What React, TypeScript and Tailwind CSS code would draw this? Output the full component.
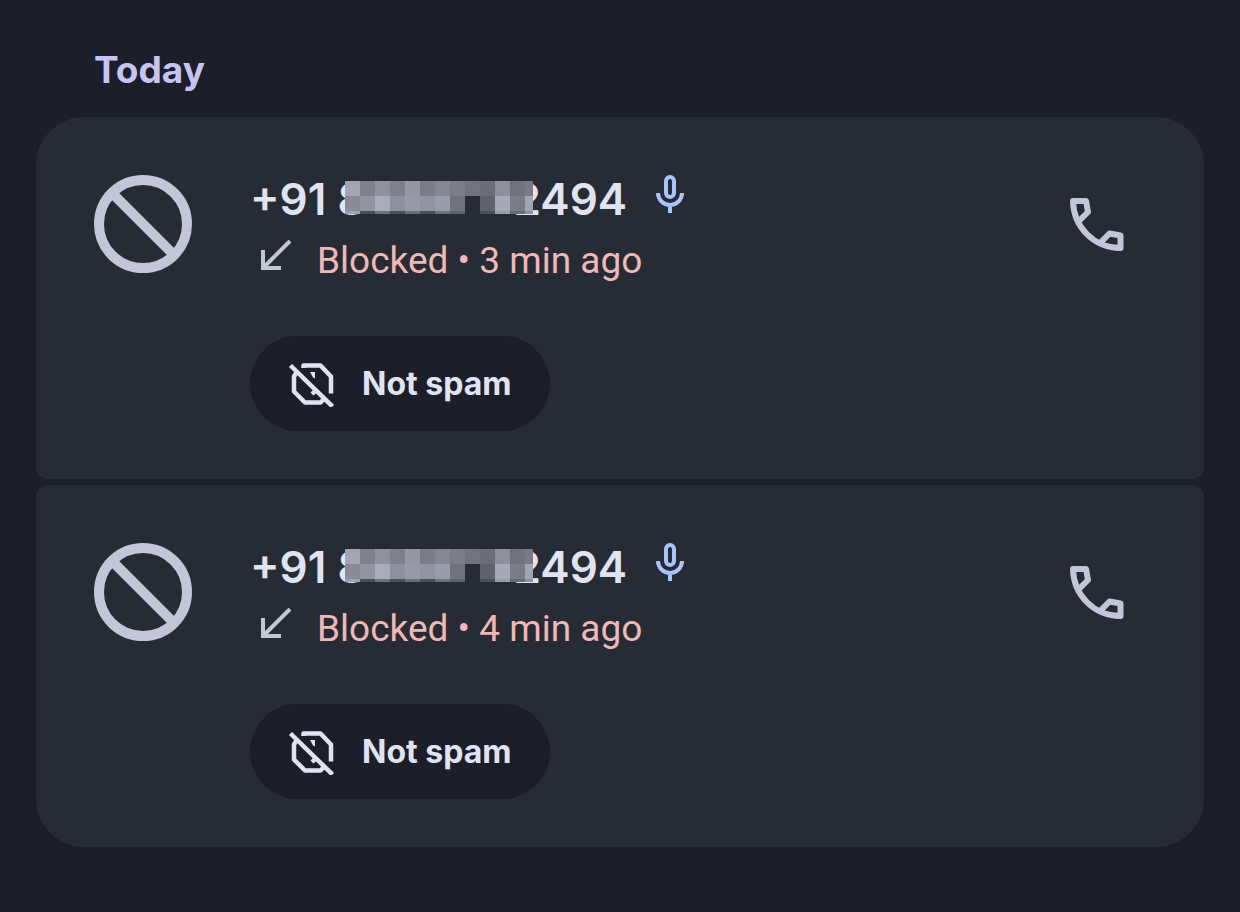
import React from "react";

const calls = [
  { id: "call-1", prefix: "+91 8", suffix: "2494", status: "Blocked", time: "3 min ago" },
  { id: "call-2", prefix: "+91 8", suffix: "2494", status: "Blocked", time: "4 min ago" },
];

// 15px mosaic cells that hide the middle digits
const mosaic = [
  ["#a3a6b2", "#7e818b", "#8f929e", "#7e818b", "#9497a3", "#7a7d88", "#848792", "#7b7e89", "#71747f", "#6b6e78", "#8c8f9c", "#70737e", "#787b85"],
  ["#898c97", "#9194a0", "#a9acba", "#8c8f9c", "#979aa6", "#9093a0", "#999ca9", "#70737e", "#292c37", "#5f626d", "#a6a9b7", "#7a7d88", "#a1a4b1"],
  ["#a0a3af", "#4c4f5a", "#70737e", "#4c4f5a", "#6b6e79", "#4c4f5a", "#70737e", "#5f626d", "#292c37", "#4c4f5a", "#9a9daa", "#696c77", "#8c8f9c"],
];

function Mosaic() {
  return (
    <svg viewBox="0 0 188 33" className="relative mt-[6px] -mr-[19px] -ml-[21px] h-[33px] w-[188px] shrink-0" shapeRendering="crispEdges" aria-hidden="true">
      {mosaic.map((row, y) =>
        row.map((fill, x) => <rect key={`${x}-${y}`} x={x * 15} y={y * 15} width="15" height="15" fill={fill} />)
      )}
    </svg>
  );
}

function BlockIcon() {
  return (
    <svg viewBox="0 0 98 98" className="size-[98px] shrink-0" fill="none" stroke="currentColor" strokeWidth="10" aria-hidden="true">
      <circle cx="49" cy="49" r="44" />
      <path d="M18 18l62 62" />
    </svg>
  );
}

function MicIcon() {
  return (
    <svg viewBox="5 2 14 19" className="h-[38px] w-7 shrink-0 text-[#a9c4fb]" fill="none" stroke="currentColor" strokeWidth="2" aria-hidden="true">
      <rect x="10" y="3" width="4" height="10" rx="2" />
      <path d="M6 11a6 6 0 0 0 12 0M12 17v4" />
    </svg>
  );
}

function ReceivedIcon() {
  return (
    <svg viewBox="0 0 32 32" className="size-8 shrink-0 text-[#c3c6d7]" fill="none" stroke="currentColor" strokeWidth="4" aria-hidden="true">
      <path d="M3 10v18h18M3 28L30 1" />
    </svg>
  );
}

function NotSpamIcon() {
  return (
    <svg viewBox="-1 -2 46 46" className="size-[46px] shrink-0" fill="none" stroke="currentColor" strokeWidth="4.500" strokeLinejoin="round" aria-hidden="true">
      <path d="M14.500 5V2.500h17L42 13.500V30.500" />
      <path d="M7.500 9.500l-2.500 4V28.500L16 39.500h15.500L35 36" />
      <path d="M1.500 2.500L43.500 43.500" />
      <path d="M21 9h5v6.500l-2-1zM21.500 29.500l2.500-2.500 3.500 3-3 2.500z" fill="currentColor" stroke="none" />
    </svg>
  );
}

function PhoneIcon() {
  return (
    <svg viewBox="0 0 54 54" className="size-[54px]" fill="none" stroke="currentColor" strokeWidth="6" strokeLinejoin="round" aria-hidden="true">
      <path d="M9.500 22.500L18 14L16 3H3C3.500 29 24 50 50.500 50V37.500L39.500 35.500L31 44" />
    </svg>
  );
}

export default function App() {
  return (
    <main className="min-h-screen bg-[#1c1e29] px-9 pt-[46px] pb-16 font-['Inter',sans-serif] text-[#e0e4f2]">
      <h2 className="mb-[23px] pl-[58px] text-[37px] leading-[48px] font-bold text-[#c7c5f0]">Today</h2>

      <ul className="flex flex-col gap-[6px]">
        {calls.map((call) => (
          <li
            key={call.id}
            className="flex items-start rounded-xl bg-[#272b33] pt-[58px] pr-20 pb-12 pl-[58px] text-[#c3c6d7] first:rounded-t-[48px] last:rounded-b-[48px]"
          >
            <BlockIcon />

            <div className="ml-[58px] min-w-0 flex-1">
              <div className="flex items-start text-[44px] leading-[48px] font-semibold whitespace-nowrap text-[#e0e4f2]">
                <span>{call.prefix}</span>
                <Mosaic />
                <span className="mr-[29px]">{call.suffix}</span>
                <MicIcon />
              </div>

              <div className="mt-3 flex items-start pl-[10px]">
                <span className="mt-[5px]">
                  <ReceivedIcon />
                </span>
                <p className="ml-[25px] font-['Roboto',sans-serif] text-[37px] leading-[52px] whitespace-nowrap text-[#f0b8b8]">
                  {call.status} • {call.time}
                </p>
              </div>

              <button
                type="button"
                className="mt-[49px] flex h-[95px] items-center gap-7 rounded-full bg-[#1c1e29] px-[38px] text-[32px] leading-10 font-bold text-[#e0e4f2]"
              >
                <NotSpamIcon />
                Not spam
              </button>
            </div>

            <button type="button" aria-label="Call" className="mt-[23px] shrink-0">
              <PhoneIcon />
            </button>
          </li>
        ))}
      </ul>
    </main>
  );
}
